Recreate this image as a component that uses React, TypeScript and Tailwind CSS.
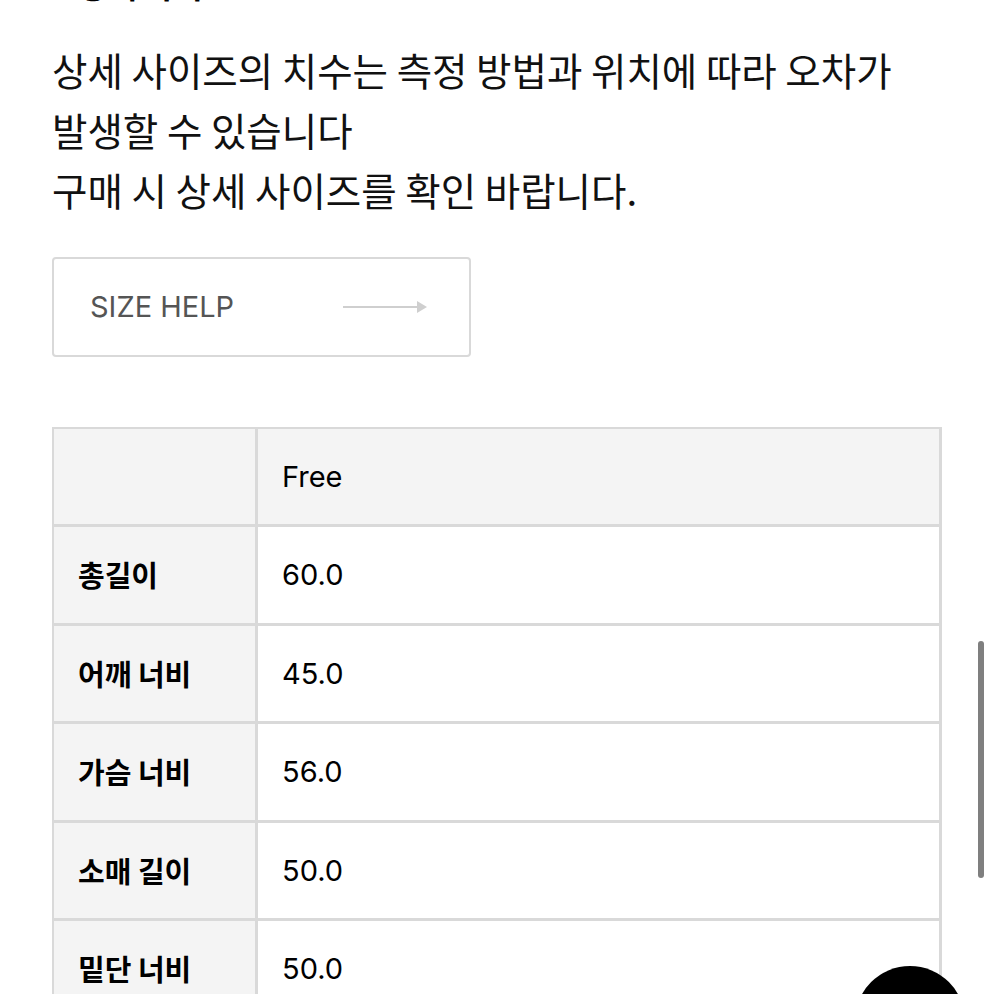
import React from "react";

const rows = [
  ["총길이", "60.0"],
  ["어깨 너비", "45.0"],
  ["가슴 너비", "56.0"],
  ["소매 길이", "50.0"],
  ["밑단 너비", "50.0"],
];

export default function App() {
  const kr = { fontFamily: '"Noto Sans CJK KR", "Noto Sans", sans-serif' };
  const lat = { fontFamily: 'Inter, "Noto Sans CJK KR", sans-serif' };
  return (
    <div className="relative h-[994px] w-[994px] overflow-hidden bg-white text-black">
      <div className="pl-[52px]">
        <div className="-mt-[35px] h-[38px] pl-[26px] text-[32px] font-bold leading-[38px]" style={kr}>
          상세 사이즈
        </div>
        <div className="mt-[36px] text-[38.5px] leading-[60px] text-[#111]" style={kr}>
          <div>상세 사이즈의 치수는 측정 방법과 위치에 따라 오차가</div>
          <div>발생할 수 있습니다</div>
          <div>구매 시 상세 사이즈를 확인 바랍니다.</div>
        </div>
        <div className="mt-[38px] flex h-[100px] w-[419px] items-center justify-between rounded-[4px] border-2 border-[#d9d9d9] pl-[36px] pr-[42px]">
          <span className="text-[29px] text-[#555]" style={lat}>
            SIZE HELP
          </span>
          <svg width="84" height="12" viewBox="0 0 84 12">
            <line x1="0" y1="6" x2="76" y2="6" stroke="#cfcfcf" strokeWidth="2" />
            <path d="M74 0 L84 6 L74 12 Z" fill="#cfcfcf" />
          </svg>
        </div>
        <div className="mt-[70px] w-[890px] border-l-2 border-t-2 border-[#d9d9d9]">
          <div className="flex h-[98px]">
            <div className="w-[204px] border-b-[3px] border-r-[3px] border-[#d9d9d9] bg-[#f4f4f4]" />
            <div
              className="flex flex-1 items-center border-b-[3px] border-r-[3px] border-[#d9d9d9] bg-[#f4f4f4] pl-[24px] text-[29px]"
              style={lat}
            >
              Free
            </div>
          </div>
          {rows.map(([k, v]) => (
            <div key={k} className="flex h-[98.5px]">
              <div
                className="flex w-[204px] items-center border-b-[3px] border-r-[3px] border-[#d9d9d9] bg-[#f4f4f4] pl-[24px] text-[29px] font-bold"
                style={kr}
              >
                {k}
              </div>
              <div
                className="flex flex-1 items-center border-b-[3px] border-r-[3px] border-[#d9d9d9] bg-white pl-[24px] text-[29px]"
                style={lat}
              >
                {v}
              </div>
            </div>
          ))}
        </div>
      </div>
      <div className="absolute left-[978px] top-[641px] h-[237px] w-[6px] rounded-full bg-[#7f7f7f]" />
      <div className="absolute left-[855px] top-[966px] h-[110px] w-[110px] rounded-full bg-black" />
    </div>
  );
}
